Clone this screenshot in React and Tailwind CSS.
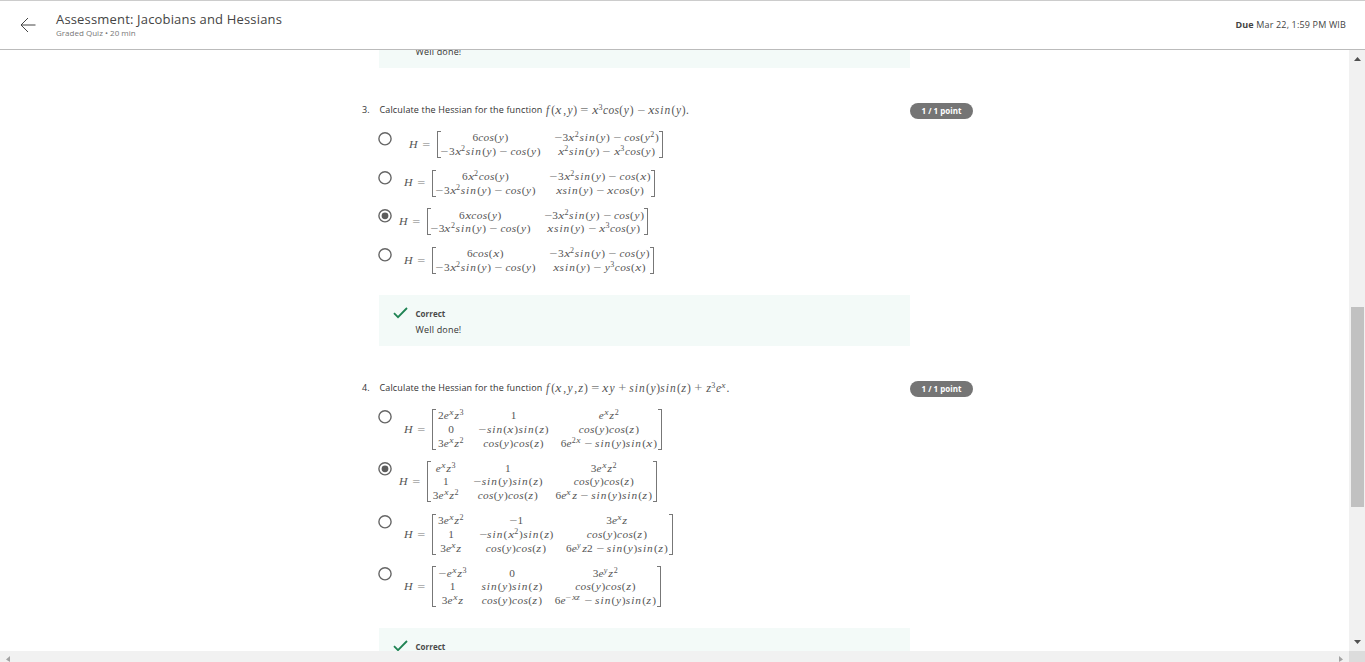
import React from 'react';

// Advance widths in em for the maths tokens.
const WIDTHS = {
  sin: 1.43, cos: 1.4, x: 0.58, y: 0.51, z: 0.49, e: 0.466, f: 0.58, H: 0.96,
  '(': 0.39, ')': 0.39, ',': 0.445, '.': 0.278,
};
const TRACKING = { sin: 'tracking-[0.09em]', cos: 'tracking-[0.03em]', x: 'scale-x-[1.2]', z: 'scale-x-110', H: 'scale-x-105' };

function Token({ t }) {
  const spaced = t.startsWith(' ');
  const s = t.trim();
  if (s === '−' || s === '+' || s === '=') {
    return (
      <span className="inline-block text-center not-italic" style={{ width: spaced ? '1.25em' : '0.778em' }}>
        <span className="inline-block scale-x-125 text-[#777]">{s}</span>
      </span>
    );
  }
  const italic = /^[a-zA-Z]/.test(s);
  return (
    <span
      className={`inline-block text-center ${italic ? 'italic' : ''} ${TRACKING[s] || ''}`}
      style={{ width: `${WIDTHS[s] || 0.5 * s.length}em` }}
    >
      {s}
    </span>
  );
}

const tokenize = (s) => s.match(/\^\{[^}]*\}| [−+=] |sin|cos|[a-zA-Z]|\d|[^\s]/g) || [];

function Maths({ children, size = 'text-[11.3px]' }) {
  return (
    <span className={`whitespace-nowrap font-['Liberation_Serif',serif] text-[#555] ${size}`}>
      {tokenize(children).map((t, i) =>
        t.startsWith('^{') ? (
          <span key={i} className="relative -top-[0.5em] mr-[0.6px] text-[8px] leading-none">
            {tokenize(t.slice(2, -1)).map((u, j) => <Token key={j} t={u} />)}
          </span>
        ) : (
          <Token key={i} t={t} />
        ),
      )}
    </span>
  );
}

function Radio({ checked }) {
  return (
    <svg className="mt-px size-[14px] shrink-0" viewBox="0 0 14 14">
      <circle cx="7" cy="6.8" r="6.1" fill="#fff" stroke="#666" strokeWidth="1.4" />
      {checked && <circle cx="7" cy="6.8" r="3.4" fill="#5c5c5c" />}
    </svg>
  );
}

function Option({ checked, indent, cols, rows, pad = 'px-[3px]' }) {
  const tall = rows.length === 3;
  return (
    <div className={`flex items-start ${tall ? 'h-[52.4px]' : 'h-[38.6px]'}`}>
      <Radio checked={checked} />
      <div className={`flex items-center ${tall ? 'h-[41px]' : 'h-[27px]'} ${indent}`}>
        <span className="w-[29px] shrink-0 pb-[5px] leading-none"><Maths>{'H = '}</Maths></span>
        <div className={`relative flex ${pad}`}>
          <span className={`absolute left-0 top-0 w-[4px] border-y border-l border-[#777] ${tall ? 'h-[41px]' : 'h-[27px]'}`} />
          <span className={`absolute right-0 top-0 w-[4px] border-y border-r border-[#777] ${tall ? 'h-[41px]' : 'h-[27px]'}`} />
          <div className={`grid items-center justify-items-center gap-x-3 ${cols} ${tall ? 'h-[41px] auto-rows-[13.7px]' : 'h-[27px] auto-rows-[13.7px]'}`}>
            {rows.flat().map((c, i) => (
              <span key={i} className="-ml-px flex h-[13.7px] items-center justify-center leading-[13px]">
                <Maths>{c}</Maths>
              </span>
            ))}
          </div>
        </div>
      </div>
    </div>
  );
}

function Feedback() {
  return (
    <div className="ml-[17px] flex h-[51px] w-[531px] shrink-0 bg-[#f3faf8] pl-[14px] pt-3">
      <svg className="h-[12px] w-[15px]" viewBox="0 0 15 12" fill="none" stroke="#1f8354" strokeWidth="1.8">
        <path d="M1 6.2 L5 10.2 L14 1" />
      </svg>
      <div className="-mt-[0.4px] ml-[7.5px] leading-[13px]">
        <div className="text-[8px] font-bold tracking-[0.02px] text-[#4a4a4a]">Correct</div>
        <div className="mt-[3.4px] text-[9px] tracking-[0.18px] text-[#333]">Well done!</div>
      </div>
    </div>
  );
}

function Prompt({ n, text, formula }) {
  return (
    <div className="flex h-[16px] items-center">
      <span className="w-[17.5px] pb-[2px] text-[9px] text-[#333]">{n}.</span>
      <span className="whitespace-nowrap pb-[2px] text-[9px] tracking-[0.14px] text-[#333]">{text}</span>
      <span className="ml-[2px] pb-[6px] leading-none"><Maths size="text-[11.45px]">{formula}</Maths></span>
      <span className="ml-auto flex h-[16px] w-[63px] items-center justify-center rounded-full bg-[#757575] text-[8px] font-bold text-white">
        1 / 1 point
      </span>
    </div>
  );
}

const A = '−3x^{2}sin(y) − cos(y)';

const Q3 = [
  { indent: 'ml-[16px]', cols: 'grid-cols-[102px_106px]', rows: [['6cos(y)', '−3x^{2}sin(y) − cos(y^{2})'], [A, 'x^{2}sin(y) − x^{3}cos(y)']] },
  { indent: 'ml-[11px]', cols: 'grid-cols-[102px_103px]', rows: [['6x^{2}cos(y)', '−3x^{2}sin(y) − cos(x)'], [A, 'xsin(y) − xcos(y)']] },
  { checked: true, indent: 'ml-[6.4px]', cols: 'grid-cols-[101px_102px]', rows: [['6xcos(y)', A], [A, 'xsin(y) − x^{3}cos(y)']] },
  { indent: 'ml-[11px]', cols: 'grid-cols-[102px_102px]', rows: [['6cos(x)', A], [A, 'xsin(y) − y^{3}cos(x)']] },
];

const Q4 = [
  { indent: 'ml-[11px]', cols: 'grid-cols-[31px_70px_97px]', rows: [['2e^{x}z^{3}', '1', 'e^{x}z^{2}'], ['0', '−sin(x)sin(z)', 'cos(y)cos(z)'], ['3e^{x}z^{2}', 'cos(y)cos(z)', '6e^{2x} − sin(y)sin(x)']] },
  { checked: true, indent: 'ml-[6.4px]', cols: 'grid-cols-[30px_70px_98px]', rows: [['e^{x}z^{3}', '1', '3e^{x}z^{2}'], ['1', '−sin(y)sin(z)', 'cos(y)cos(z)'], ['3e^{x}z^{2}', 'cos(y)cos(z)', '6e^{x}z − sin(y)sin(z)']] },
  { indent: 'ml-[11px]', cols: 'grid-cols-[31px_75px_103px]', rows: [['3e^{x}z^{2}', '−1', '3e^{x}z'], ['1', '−sin(x^{2})sin(z)', 'cos(y)cos(z)'], ['3e^{x}z', 'cos(y)cos(z)', '6e^{y}z2 − sin(y)sin(z)']] },
  { indent: 'ml-[11px]', cols: 'grid-cols-[34px_61px_102px]', rows: [['−e^{x}z^{3}', '0', '3e^{y}z^{2}'], ['1', 'sin(y)sin(z)', 'cos(y)cos(z)'], ['3e^{x}z', 'cos(y)cos(z)', '6e^{−xz} − sin(y)sin(z)']] },
];

export default function App() {
  return (
    <div className="flex h-[662px] w-[1365px] flex-col overflow-hidden bg-white font-['Open_Sans',sans-serif]">
      <header className="flex h-[50px] shrink-0 items-center border-b border-t border-b-[#bbb] border-t-[#ccc] pl-5 pr-[19px]">
        <svg className="h-[16px] w-[16px]" viewBox="0 0 16 16" fill="none" stroke="#444" strokeWidth="1">
          <path d="M8 1 L1 8 L8 15 M1 8 H15.5" />
        </svg>
        <div className="ml-5 whitespace-nowrap">
          <div className="text-[13px] leading-[15px] tracking-[0.17px] text-[#444]">Assessment: Jacobians and Hessians</div>
          <div className="text-[8px] leading-[12px] tracking-[0.01px] text-[#777]">Graded Quiz • 20 min</div>
        </div>
        <div className="ml-auto whitespace-nowrap text-[9px] tracking-[0.16px] text-[#444]"><b>Due</b> Mar 22, 1:59 PM WIB</div>
      </header>
      <div className="flex h-[601px] shrink-0">
        <main className="flex w-[1349px] flex-col overflow-hidden pl-[362px]">
          <div className="-mt-[33px]"><Feedback /></div>
          <section className="mt-[35px] w-[611px]">
            <Prompt n="3" text="Calculate the Hessian for the function" formula="f(x,y) = x^{3}cos(y) − xsin(y)." />
            <div className="ml-[16px] mt-[12px] h-[164px]">
              {Q3.map((o, i) => <Option key={i} {...o} />)}
            </div>
            <Feedback />
          </section>
          <section className="mt-[35px] w-[611px]">
            <Prompt n="4" text="Calculate the Hessian for the function" formula="f(x,y,z) = xy + sin(y)sin(z) + z^{3}e^{x}." />
            <div className="ml-[16px] mt-[12px] h-[219px]">
              {Q4.map((o, i) => <Option key={i} {...o} pad="px-[4px]" />)}
            </div>
            <Feedback />
          </section>
        </main>
        <div className="flex w-4 flex-col items-center bg-[#f1f1f1]">
          <svg className="mt-[7px] h-[4px] w-[7px]" viewBox="0 0 7 4"><path d="M0 4 L3.5 0 L7 4Z" fill="#505050" /></svg>
          <div className="mt-[246px] h-[200px] w-[13px] bg-[#c1c1c1]" />
          <svg className="mb-[7px] mt-auto h-[4px] w-[7px]" viewBox="0 0 7 4"><path d="M0 0 L3.5 4 L7 0Z" fill="#505050" /></svg>
        </div>
      </div>
      <div className="flex h-[11px] shrink-0 bg-[#f1f1f1]">
        <svg className="ml-[6px] mt-[5px] h-[6px] w-[4px]" viewBox="0 0 4 6"><path d="M4 0 L0 3.5 L4 6Z" fill="#a3a3a3" /></svg>
        <svg className="ml-auto mr-[6px] mt-[5px] h-[6px] w-[4px]" viewBox="0 0 4 6"><path d="M0 0 L4 3.5 L0 6Z" fill="#a3a3a3" /></svg>
        <div className="h-full w-4 bg-[#dcdcdc]" />
      </div>
    </div>
  );
}
